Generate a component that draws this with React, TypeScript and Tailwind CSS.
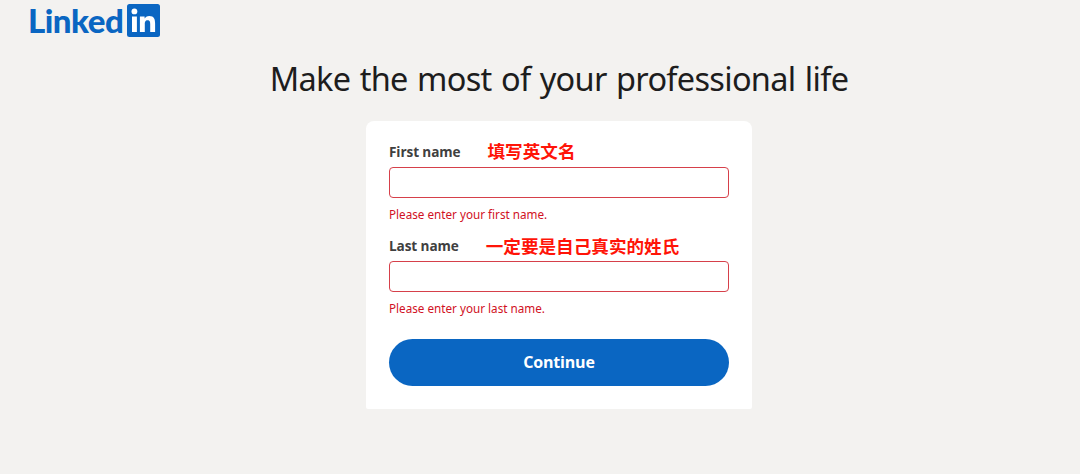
import { useState, FormEvent } from 'react';

interface NameFieldProps {
  id: string;
  label: string;
  note: string;
  error: string;
  value: string;
  onChange: (value: string) => void;
}

function LinkedInLogo() {
  return (
    <div className="flex items-start text-[#0a66c2]" aria-label="LinkedIn">
      <span className="w-[99px] whitespace-nowrap font-['Lato','Liberation_Sans',sans-serif] text-[33px] font-black leading-[40px] tracking-[-0.5px]">
        Linked
      </span>
      <svg className="mt-1 h-[33px] w-[33px]" viewBox="0 0 33 33" fill="none">
        <rect width="33" height="33" rx="2.5" fill="currentColor" />
        <circle cx="7.4" cy="7.4" r="2.9" fill="#fff" />
        <path
          fill="#fff"
          d="M5 12.4h4.9v15.7H5zM12.9 12.4h4.7v2.2c.7-1.3 2.3-2.6 4.7-2.6 4.9 0 5.8 3.2 5.8 7.5v8.6h-4.9v-7.7c0-1.8 0-4.2-2.5-4.2-2.6 0-2.9 2-2.9 4.1v7.8h-4.9z"
        />
      </svg>
    </div>
  );
}

function NameField({ id, label, note, error, value, onChange }: NameFieldProps) {
  return (
    <div className="h-[94.5px]">
      <div className="flex h-6 items-center">
        <label htmlFor={id} className="mt-px whitespace-nowrap text-[13.6px] font-bold tracking-[-0.1px] text-[#404040]">
          {label}
        </label>
        <span className="-mt-px ml-[27px] whitespace-nowrap text-[17.6px] font-bold leading-6 text-[#ff1408]">
          {note}
        </span>
      </div>
      <input
        id={id}
        type="text"
        value={value}
        onChange={(e) => onChange(e.target.value)}
        className="mt-[3px] block h-[31px] w-full rounded border border-[#d6404a] bg-white px-2 text-sm outline-none"
      />
      <p className="mt-2 font-['Noto_Sans',sans-serif] text-[11.7px] leading-4 text-[#d11124]">{error}</p>
    </div>
  );
}

export default function App() {
  const [firstName, setFirstName] = useState('');
  const [lastName, setLastName] = useState('');

  const handleSubmit = (e: FormEvent) => {
    e.preventDefault();
  };

  return (
    <div className="h-[474px] overflow-hidden bg-[#f3f2f0] font-['Open_Sans','Noto_Sans_CJK_SC',sans-serif]">
      <header className="h-[54px] pl-[28px]">
        <LinkedInLogo />
      </header>

      <main className="flex flex-col items-center pl-[38px]">
        <h1 className="h-[66.5px] whitespace-nowrap font-['Noto_Sans',sans-serif] text-[32.5px] leading-[50px] tracking-[-0.7px] [word-spacing:1.6px] text-[#1d1d1d]">
          Make the most of your professional life
        </h1>

        <form
          onSubmit={handleSubmit}
          noValidate
          className="h-[288.5px] w-[386px] rounded-t-lg rounded-b-xs bg-white px-[23px] pt-[19px]"
        >
          <NameField
            id="first-name"
            label="First name"
            note="填写英文名"
            error="Please enter your first name."
            value={firstName}
            onChange={setFirstName}
          />
          <NameField
            id="last-name"
            label="Last name"
            note="一定要是自己真实的姓氏"
            error="Please enter your last name."
            value={lastName}
            onChange={setLastName}
          />
          <button
            type="submit"
            className="mt-[10px] block h-[47px] w-full rounded-full bg-[#0a66c2] text-base font-bold tracking-[-0.2px] text-white"
          >
            Continue
          </button>
        </form>
      </main>
    </div>
  );
}
